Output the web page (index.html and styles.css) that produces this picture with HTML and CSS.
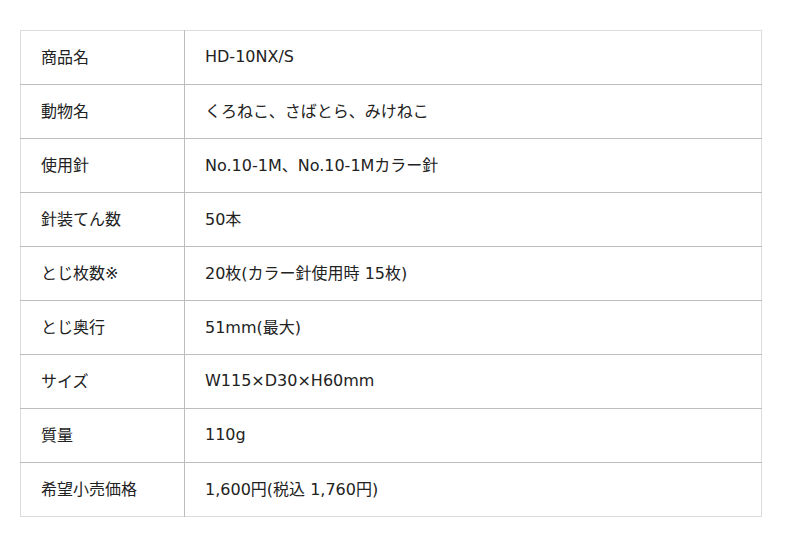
FILE: index.html
```
<!DOCTYPE html>
<html lang="ja">
<head>
<meta charset="utf-8">
<link rel="stylesheet" href="styles.css">
</head>
<body>
<table class="spec">
<tbody>
<tr><th>商品名</th><td>HD-10NX/S</td></tr>
<tr><th>動物名</th><td>くろねこ、さばとら、みけねこ</td></tr>
<tr><th>使用針</th><td>No.10-1M、No.10-1Mカラー針</td></tr>
<tr><th>針装てん数</th><td>50本</td></tr>
<tr><th>とじ枚数※</th><td>20枚(カラー針使用時 15枚)</td></tr>
<tr><th>とじ奥行</th><td>51mm(最大)</td></tr>
<tr><th>サイズ</th><td>W115×D30×H60mm</td></tr>
<tr><th>質量</th><td>110g</td></tr>
<tr><th>希望小売価格</th><td>1,600円(税込 1,760円)</td></tr>
</tbody>
</table>
</body>
</html>
```
FILE: styles.css
```
html, body {
  margin: 0;
  padding: 0;
  background: #fff;
}
body {
  padding: 30px 0 0 20px;
  font-family: "DejaVu Sans", "Noto Sans CJK JP", sans-serif;
  color: #222;
}
.spec {
  border-collapse: collapse;
  width: 742px;
  border: 1px solid #dcdcdc;
}
.spec th, .spec td {
  height: 54px;
  padding: 0 0 3px 20px;
  font-size: 16px;
  font-weight: normal;
  text-align: left;
  vertical-align: middle;
  box-sizing: border-box;
}
.spec th {
  width: 164px;
  border-right: 1px solid #bdbdbd;
}
.spec tr:not(:last-child) th,
.spec tr:not(:last-child) td {
  border-bottom: 1px solid #bdbdbd;
}
```
